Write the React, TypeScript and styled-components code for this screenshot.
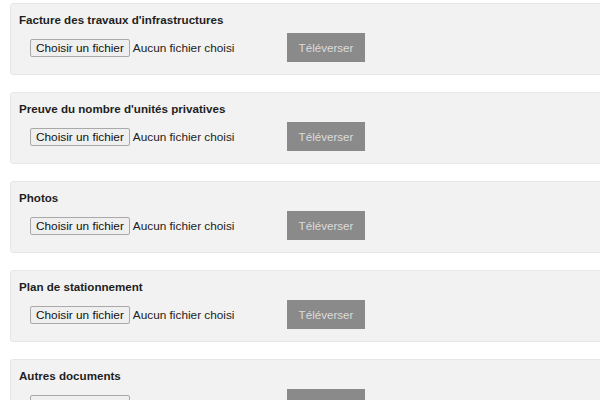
import styled, { createGlobalStyle } from "styled-components"

const GlobalStyle = createGlobalStyle`
  html, body {
    margin: 0;
    padding: 0;
    background: #fff;
    overflow: hidden;
  }
  body {
    font-family: "Liberation Sans", Arial, sans-serif;
    color: #222;
  }
`

const List = styled.main`
  display: flex;
  flex-direction: column;
  gap: 17px;
  width: 620px;
  padding: 3px 0 0 10px;
`

const Panel = styled.section`
  background-color: #f2f2f2;
  border: 1px solid #e7e7e7;
  border-radius: 3px;
  padding: 9px 8px 0 8px;
  box-sizing: border-box;
  height: 72px;
`

const Title = styled.h3`
  margin: 0;
  font-size: 11.6px;
  line-height: 14px;
  font-weight: bold;
  color: #1e1e1e;
`

const Row = styled.div`
  display: flex;
  align-items: center;
  padding-left: 11px;
  margin-top: 6px;
`

const FileField = styled.label`
  display: flex;
  align-items: center;
  gap: 3px;
  width: 257px;
  font-size: 11.8px;
  color: #222;
  & > input {
    display: none;
  }
`

const FileButton = styled.span`
  display: inline-block;
  background-color: #efefef;
  border: 1px solid #a9a9a9;
  border-radius: 2px;
  padding: 1px 5px;
  line-height: 14px;
  font-size: 11.8px;
  color: #111;
`

const UploadButton = styled.button`
  width: 78px;
  height: 29px;
  border: none;
  border-radius: 0;
  background-color: #8a8a8a;
  color: #dcdcdc;
  font-family: "Liberation Sans", Arial, sans-serif;
  font-size: 11.6px;
  padding: 0;
`

const sections = [
  "Facture des travaux d'infrastructures",
  "Preuve du nombre d'unités privatives",
  "Photos",
  "Plan de stationnement",
  "Autres documents",
]

function App() {
  return (
    <>
      <GlobalStyle />
      <List>
        {sections.map((name) => (
          <Panel key={name}>
            <Title>{name}</Title>
            <Row>
              <FileField>
                <input type="file" />
                <FileButton>Choisir un fichier</FileButton>
                Aucun fichier choisi
              </FileField>
              <UploadButton disabled>Téléverser</UploadButton>
            </Row>
          </Panel>
        ))}
      </List>
    </>
  )
}

export default App
